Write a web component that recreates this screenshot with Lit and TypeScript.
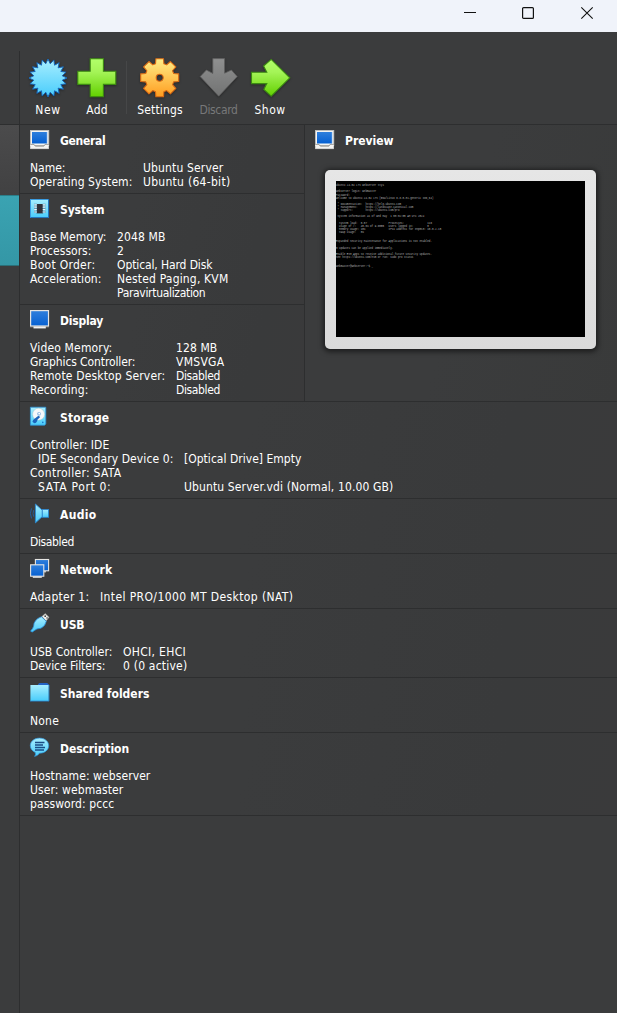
import { LitElement, html, svg, css, type TemplateResult } from "lit";
import { customElement, property } from "lit/decorators.js";

/** A single line of text whose tracking is adjusted to a given advance width. */
@customElement("fit-text")
class FitText extends LitElement {
  @property() text = "";
  @property({ type: Number }) w = 0;
  static styles = css`
    :host { display: block; white-space: pre; }
    .t { display: inline-block; }
  `;
  render() {
    return html`<span class="t">${this.text}</span>`;
  }
  updated() {
    const s = this.renderRoot.querySelector("span") as HTMLElement;
    s.style.letterSpacing = "0px";
    const n = s.getBoundingClientRect().width;
    if (this.w && n) s.style.letterSpacing = `${(this.w - 0.6 - n) / this.text.length}px`;
  }
}

const defs = svg`<defs>
  <linearGradient id="cy" x1="0" y1="0" x2="0" y2="1"><stop offset="0" stop-color="#a8eeff"/><stop offset="1" stop-color="#48ccfb"/></linearGradient>
  <linearGradient id="bl" x1="0" y1="0" x2="0" y2="1"><stop offset="0" stop-color="#2f7fdc"/><stop offset="1" stop-color="#0560d2"/></linearGradient>
  <linearGradient id="gr" x1="0" y1="0" x2="0" y2="1"><stop offset="0" stop-color="#b2ff6a"/><stop offset=".35" stop-color="#a4f457"/><stop offset="1" stop-color="#62d000"/></linearGradient>
  <linearGradient id="or" x1="0" y1="0" x2="0" y2="1"><stop offset="0" stop-color="#ffee88"/><stop offset="1" stop-color="#ff9d20"/></linearGradient>
  <linearGradient id="gy" x1="0" y1="0" x2="0" y2="1"><stop offset="0" stop-color="#8f9090"/><stop offset="1" stop-color="#727373"/></linearGradient>
</defs>`;

const ring = (count: number, outer: number, inner: number) =>
  Array.from({ length: count * 2 }, (_, i) => {
    const a = (i * Math.PI) / count - Math.PI / 2;
    const r = i % 2 ? inner : outer;
    return `${(20 + r * Math.cos(a)).toFixed(2)},${(20 + r * Math.sin(a)).toFixed(2)}`;
  }).join(" ");

const gear = () => {
  const pts: string[] = [];
  for (let i = 0; i < 8; i++) {
    const c = (i * Math.PI) / 4;
    for (const [off, r] of [[-0.29, 14.6], [-0.2, 19.4], [0.2, 19.4], [0.29, 14.6]]) {
      pts.push(`${(19.7 + r * Math.cos(c + off)).toFixed(2)},${(19.7 + r * Math.sin(c + off)).toFixed(2)}`);
    }
  }
  return "M" + pts.join("L") + "ZM23.2 19.7a3.5 3.5 0 1 0-7 0a3.5 3.5 0 1 0 7 0Z";
};

const big: Record<string, TemplateResult> = {
  New: svg`<polygon points=${ring(20, 19, 14.4)} fill="url(#cy)" stroke="#1766b8" stroke-width="1"/>`,
  Add: svg`<path d="M13.2 .8H26.4V13.2H38.8V26.4H26.4V38.8H13.2V26.4H.8V13.2H13.2Z" fill="url(#gr)" stroke="#3c8a12" stroke-width="1.1"/>`,
  Settings: svg`<path d=${gear()} fill="url(#or)" fill-rule="evenodd" stroke="#d96a14" stroke-width="1.1" stroke-linejoin="round"/>`,
  Discard: svg`<path d="M13.8 .6H25.6V15.2L32.4 12L38.2 18.6L19.7 38.2L1.2 18.6L7.4 12L13.8 15.4Z" fill="url(#gy)" stroke="#5f6060" stroke-width=".8"/>`,
  Show: svg`<path d="M1.5 14.2H16.8L13.6 8L21.2 1.4L39.8 19.8L21.2 38.2L13.8 31.4L16.8 25.6H1.5Z" fill="url(#gr)" stroke="#3c8a12" stroke-width="1.1"/>`,
};

const pc = svg`<rect x=".4" y=".4" width="18.4" height="15" fill="#f4f4f2" stroke="#c2c2c0" stroke-width=".8"/>
  <rect x="2" y="2" width="15" height="11.5" fill="url(#bl)"/><path d="M17 2V13.5H2" fill="none" stroke="#7fb2ea" stroke-width=".6"/>
  <path d="M.2 14.6H3.6L5 16H14L15.4 14.6H18.8V19H.2Z" fill="#f4f4f2"/><path d="M.4 14.4H4L5.4 16.2H13.8L15 14.4H18.8" fill="none" stroke="#8a8a88" stroke-width=".8"/>
  <path d="M.2 18.7H18.8" stroke="#b5b5b3" stroke-width=".6"/>`;

const small: Record<string, TemplateResult> = {
  General: pc,
  Preview: pc,
  System: svg`<rect x=".5" y=".5" width="18" height="18" fill="url(#cy)" stroke="#3b9ce0"/><path d="M18.6 0V18.6H.5" fill="none" stroke="#1d66ad" stroke-width=".8"/>
    <rect x="6.5" y="5" width="6.6" height="9.4" fill="#303039"/>
    <path d="M4 5.8H7M4 8.2H7M4 10.6H7M4 13H7M12.6 5.8H15.6M12.6 8.2H15.6M12.6 10.6H15.6M12.6 13H15.6" stroke="#5a8fac" stroke-width="2"/>
    <path d="M4.2 5.8H6.8M4.2 8.2H6.8M4.2 10.6H6.8M4.2 13H6.8M12.8 5.8H15.4M12.8 8.2H15.4M12.8 10.6H15.4M12.8 13H15.4" stroke="#eaf6fa" stroke-width="1.2"/>`,
  Display: svg`<rect x=".6" y=".6" width="17.9" height="15.4" fill="url(#bl)" stroke="#e4e4e2" stroke-width="1.2"/>
    <path d="M3.5 16.4H15.8V18.4H3.5Z" fill="#fbfbfa"/><path d="M0 16.9H19" stroke="#c9c9c7" stroke-width=".5"/>`,
  Storage: svg`<path d="M.4 .2H15.8V17L14.6 18.2H.4Z" fill="url(#cy)" stroke="#2c8fd6" stroke-width=".8"/>
    <circle cx="8.6" cy="7.2" r="6" fill="#f6f8fa" stroke="#9bb" stroke-width=".4"/><circle cx="9" cy="6.8" r="1.9" fill="#8fb8e4"/><circle cx="9.2" cy="6.6" r=".9" fill="#fff"/>
    <path d="M8.4 8.8L5.2 11.3Q3 12.5 2.4 14.6Q4 17 6 15.8Q7.4 14.4 7.4 12.8L10.2 10Z" fill="#1b63bc"/><circle cx="12.8" cy="15.4" r=".8" fill="#1b76cc"/>`,
  Audio: svg`<path d="M5.4 0L12.3 6.2V12.6L5.4 18.9Z" fill="url(#cy)" stroke="#2a86d0" stroke-width=".9"/>
    <rect x="12.3" y="5.5" width="6.3" height="7.8" fill="url(#cy)" stroke="#2a86d0" stroke-width=".8"/>
    <path d="M3.6 6.2Q2.5 9.4 3.6 12.6M1.5 4.4Q-.7 9.4 1.5 14.4" fill="none" stroke="#2260a0" stroke-width="1"/>`,
  Network: svg`<rect x="5.4" y=".5" width="13.2" height="11.3" fill="url(#bl)" stroke="#e6e6e4" stroke-width="1.1"/><path d="M14 12.8H16" stroke="#f2f2f2" fill="none"/>
    <rect x=".6" y="5.8" width="13.2" height="11.4" fill="url(#bl)" stroke="#e6e6e4" stroke-width="1.1"/><path d="M2.8 18.1H11.8" stroke="#f5f5f3" stroke-width="1.3"/>`,
  USB: svg`<path d="M12 2.6L15.2 -.3L18.9 3.3L16 6.8Z" fill="#f2f2ee" stroke="#c0beb8" stroke-width=".7"/><rect x="14.4" y="1.4" width="1.6" height="1.6" fill="#444"/><rect x="16.4" y="3.3" width="1.3" height="1.3" fill="#444"/>
    <path d="M11.4 2.7L16.3 7.3Q15.2 12.3 11 14.2Q6.4 14.5 3.8 16.9Q2.4 18.8.8 17.4Q.4 16.2 2.2 15.2Q4 12.8 4.1 9Q6 4.4 11.4 2.7Z" fill="url(#cy)" stroke="#2a86d0" stroke-width=".8"/>`,
  "Shared folders": svg`<path d="M8 3V1.2L9.4 0H17.2L19 1.4V4H8Z" fill="#2363c4"/><rect x=".4" y="2" width="18.4" height="16" fill="url(#cy)"/><path d="M0 18.1H19V2" fill="none" stroke="#2a86d0" stroke-width=".8"/>`,
  Description: svg`<path d="M9.5 .1C14.7 .1 18.7 3.4 18.7 7.7C18.7 12 14.7 15.2 9.4 15.2Q7.9 17.9 4.6 18.4Q6 16.6 5.3 14.5C2.4 13.2 .3 10.7 .3 7.7C.3 3.4 4.4 .1 9.5 .1Z" fill="url(#cy)" stroke="#2f96de" stroke-width=".7"/>
    <path d="M5 4.5H14.5M5 7H13M5 9.5H15M5 12H14" stroke="#1b4c86" stroke-width="1.3"/>`,
};

type T = [string, number];
interface Section { title: T; col?: number; rows: { k: T; v?: T; sub?: boolean }[] }

const upper: Section[] = [
  { title: ["General", 46], col: 113, rows: [
    { k: ["Name:", 36], v: ["Ubuntu Server", 81] },
    { k: ["Operating System:", 103], v: ["Ubuntu (64-bit)", 88] }] },
  { title: ["System", 45], col: 87, rows: [
    { k: ["Base Memory:", 77], v: ["2048 MB", 49] },
    { k: ["Processors:", 62], v: ["2", 7] },
    { k: ["Boot Order:", 66], v: ["Optical, Hard Disk", 96] },
    { k: ["Acceleration:", 72], v: ["Nested Paging, KVM", 112] },
    { k: ["", 0], v: ["Paravirtualization", 89] }] },
  { title: ["Display", 43.6], col: 146, rows: [
    { k: ["Video Memory:", 83], v: ["128 MB", 42] },
    { k: ["Graphics Controller:", 106], v: ["VMSVGA", 49] },
    { k: ["Remote Desktop Server:", 136], v: ["Disabled", 44.6] },
    { k: ["Recording:", 59], v: ["Disabled", 44.6] }] },
];
const lower: Section[] = [
  { title: ["Storage", 50], col: 154, rows: [
    { k: ["Controller: IDE", 80] },
    { k: ["IDE Secondary Device 0:", 136], v: ["[Optical Drive] Empty", 118], sub: true },
    { k: ["Controller: SATA", 92] },
    { k: ["SATA Port 0:", 74], v: ["Ubuntu Server.vdi (Normal, 10.00 GB)", 210], sub: true }] },
  { title: ["Audio", 37], rows: [{ k: ["Disabled", 44.6] }] },
  { title: ["Network", 53], col: 70, rows: [{ k: ["Adapter 1:", 60], v: ["Intel PRO/1000 MT Desktop (NAT)", 194] }] },
  { title: ["USB", 25], col: 93, rows: [
    { k: ["USB Controller:", 83], v: ["OHCI, EHCI", 63.6] },
    { k: ["Device Filters:", 76], v: ["0 (0 active)", 65] }] },
  { title: ["Shared folders", 90], rows: [{ k: ["None", 29.6] }] },
  { title: ["Description", 69.6], rows: [
    { k: ["Hostname: webserver", 121] }, { k: ["User: webmaster", 94] }, { k: ["password: pccc", 85] }] },
];

const terminal = `
Ubuntu 24.04 LTS webserver tty1

webserver login: webmaster
Password:
Welcome to Ubuntu 24.04 LTS (GNU/Linux 6.8.0-31-generic x86_64)

 * Documentation:  https://help.ubuntu.com
 * Management:     https://landscape.canonical.com
 * Support:        https://ubuntu.com/pro

 System information as of Wed May  1 03:02:05 AM UTC 2024

  System load:  0.07              Processes:               116
  Usage of /:   40.6% of 9.60GB   Users logged in:         0
  Memory usage: 10%               IPv4 address for enp0s3: 10.0.2.15
  Swap usage:   0%


Expanded Security Maintenance for Applications is not enabled.

0 updates can be applied immediately.

Enable ESM Apps to receive additional future security updates.
See https://ubuntu.com/esm or run: sudo pro status


webmaster@webserver:~$ _`;

@customElement("app-root")
class AppRoot extends LitElement {
  static styles = css`
    :host { display: flex; flex-direction: column; width: 617px; height: 1013px; overflow: hidden; background: #3b3c3d;
      color: #fff; font: 12px/14px "DejaVu Sans Condensed", "DejaVu Sans", sans-serif; font-stretch: condensed; }
    * { box-sizing: border-box; }
    svg { display: block; overflow: visible; }
    .titlebar { height: 32px; flex: none; background: #f0f3fa; display: flex; justify-content: flex-end; gap: 47px; padding: 7px 24px 0 0; }
    .min { margin-right: -1px; }
    .body { flex: 1; display: flex; margin-top: 19px; }
    .side { width: 20px; border-right: 1px solid #2d2e2f; padding-top: 73px; }
    .vm { height: 71px; border-top: 1px solid #2d2e2f; background: linear-gradient(#4b4b4c, #414142); }
    .vm.on { height: 71px; border-top-color: #2a7e89; border-bottom: 1px solid #2b6f78; background: linear-gradient(#3aa3b2, #3497a6); }
    .main { flex: 1; min-width: 0; }
    .tools { height: 73px; padding: 7px 0 0 4px; display: grid; grid-template-columns: 48px 50px 9px 58px 59px 44px; justify-items: center; align-content: start; }
    .tool { display: flex; flex-direction: column; align-items: center; gap: 5px; }
    .tool.off { color: #777879; }
    .icon40 { filter: drop-shadow(0 1px 1px rgba(0,0,0,.35)); }
    .sep { width: 1px; height: 53px; margin-top: 3px; background: #464748; }
    .top { display: flex; }
    .left { width: 285px; border-right: 1px solid #2d2e2f; }
    .section { border-top: 1px solid #2d2e2f; padding: 5px 0 4px 10px;
      background: linear-gradient(105deg, #3b3c3d 0 38%, #393a3b 80%, #3a3a3b); }
    .last { border-bottom: 1px solid #2d2e2f; }
    .head { display: flex; align-items: center; gap: 10px; height: 20px; margin-bottom: 11px; font-weight: bold; }
    .head fit-text { padding-top: 2px; }
    .row { display: flex; height: 14px; }
    .sub { padding-left: 8px; }
    .key { flex: none; }
    .preview { flex: 1; border-top: 1px solid #2d2e2f; padding: 5px 0 0 10px; background: linear-gradient(105deg, #3b3c3d 0 50%, #393a3a); }
    .preview .head { margin-bottom: 20px; }
    .frame { width: 271px; height: 179px; margin-left: 10px; padding: 11px 11px 12px; border-radius: 5px;
      background: linear-gradient(#e6e6e6, #dadada); box-shadow: 0 1px 5px 2px rgba(0,0,0,.5); }
    .term { margin: 0; width: 249px; height: 156px; background: #000; color: #b4b4b4; overflow: hidden;
      font: 2.593px/3.12px "Liberation Mono", "DejaVu Sans Mono", monospace; }
  `;

  private icon(name: string) {
    return html`<svg width="20" height="20" viewBox="0 0 20 20">${defs}${small[name]}</svg>`;
  }

  private head(t: T) {
    return html`<div class="head">${this.icon(t[0])}<fit-text .text=${t[0]} .w=${t[1]}></fit-text></div>`;
  }

  private tool(name: string, w: number, off = false) {
    return html`<div class="tool ${off ? "off" : ""}">
      <svg class="icon40" width="40" height="40" viewBox="0 0 40 40">${defs}${big[name]}</svg>
      <fit-text .text=${name} .w=${w}></fit-text>
    </div>`;
  }

  private section(s: Section, last = false) {
    return html`<div class="section ${last ? "last" : ""}">
      ${this.head(s.title)}
      ${s.rows.map((r) => html`<div class="row ${r.sub ? "sub" : ""}">
        <div class="key" style="width:${s.col ? (r.sub ? s.col - 8 : s.col) : 200}px"><fit-text .text=${r.k[0]} .w=${r.k[1]}></fit-text></div>
        ${r.v ? html`<fit-text .text=${r.v[0]} .w=${r.v[1]}></fit-text>` : ""}
      </div>`)}
    </div>`;
  }

  render() {
    return html`
      <div class="titlebar">
        <svg class="min" width="12" height="13" viewBox="0 0 12 13"><path d="M0 5.5H12" stroke="#111" stroke-width="1"/></svg>
        <svg width="12" height="13" viewBox="0 0 12 13"><rect x=".6" y=".6" width="10.8" height="10.8" rx="1" fill="none" stroke="#111" stroke-width="1.2"/></svg>
        <svg width="12" height="13" viewBox="0 0 12 13"><path d="M.3 .3L11.7 11.7M11.7 .3L.3 11.7" stroke="#111" stroke-width="1.1"/></svg>
      </div>
      <div class="body">
        <div class="side"><div class="vm"></div><div class="vm on"></div></div>
        <div class="main">
          <div class="tools">
            ${this.tool("New", 26)}${this.tool("Add", 22)}<div class="sep"></div>
            ${this.tool("Settings", 46)}${this.tool("Discard", 38.6, true)}${this.tool("Show", 31.6)}
          </div>
          <div class="top">
            <div class="left">${upper.map((s) => this.section(s))}</div>
            <div class="preview">
              ${this.head(["Preview", 49])}
              <div class="frame"><pre class="term">${terminal}</pre></div>
            </div>
          </div>
          ${lower.map((s, i) => this.section(s, i === lower.length - 1))}
        </div>
      </div>`;
  }
}
